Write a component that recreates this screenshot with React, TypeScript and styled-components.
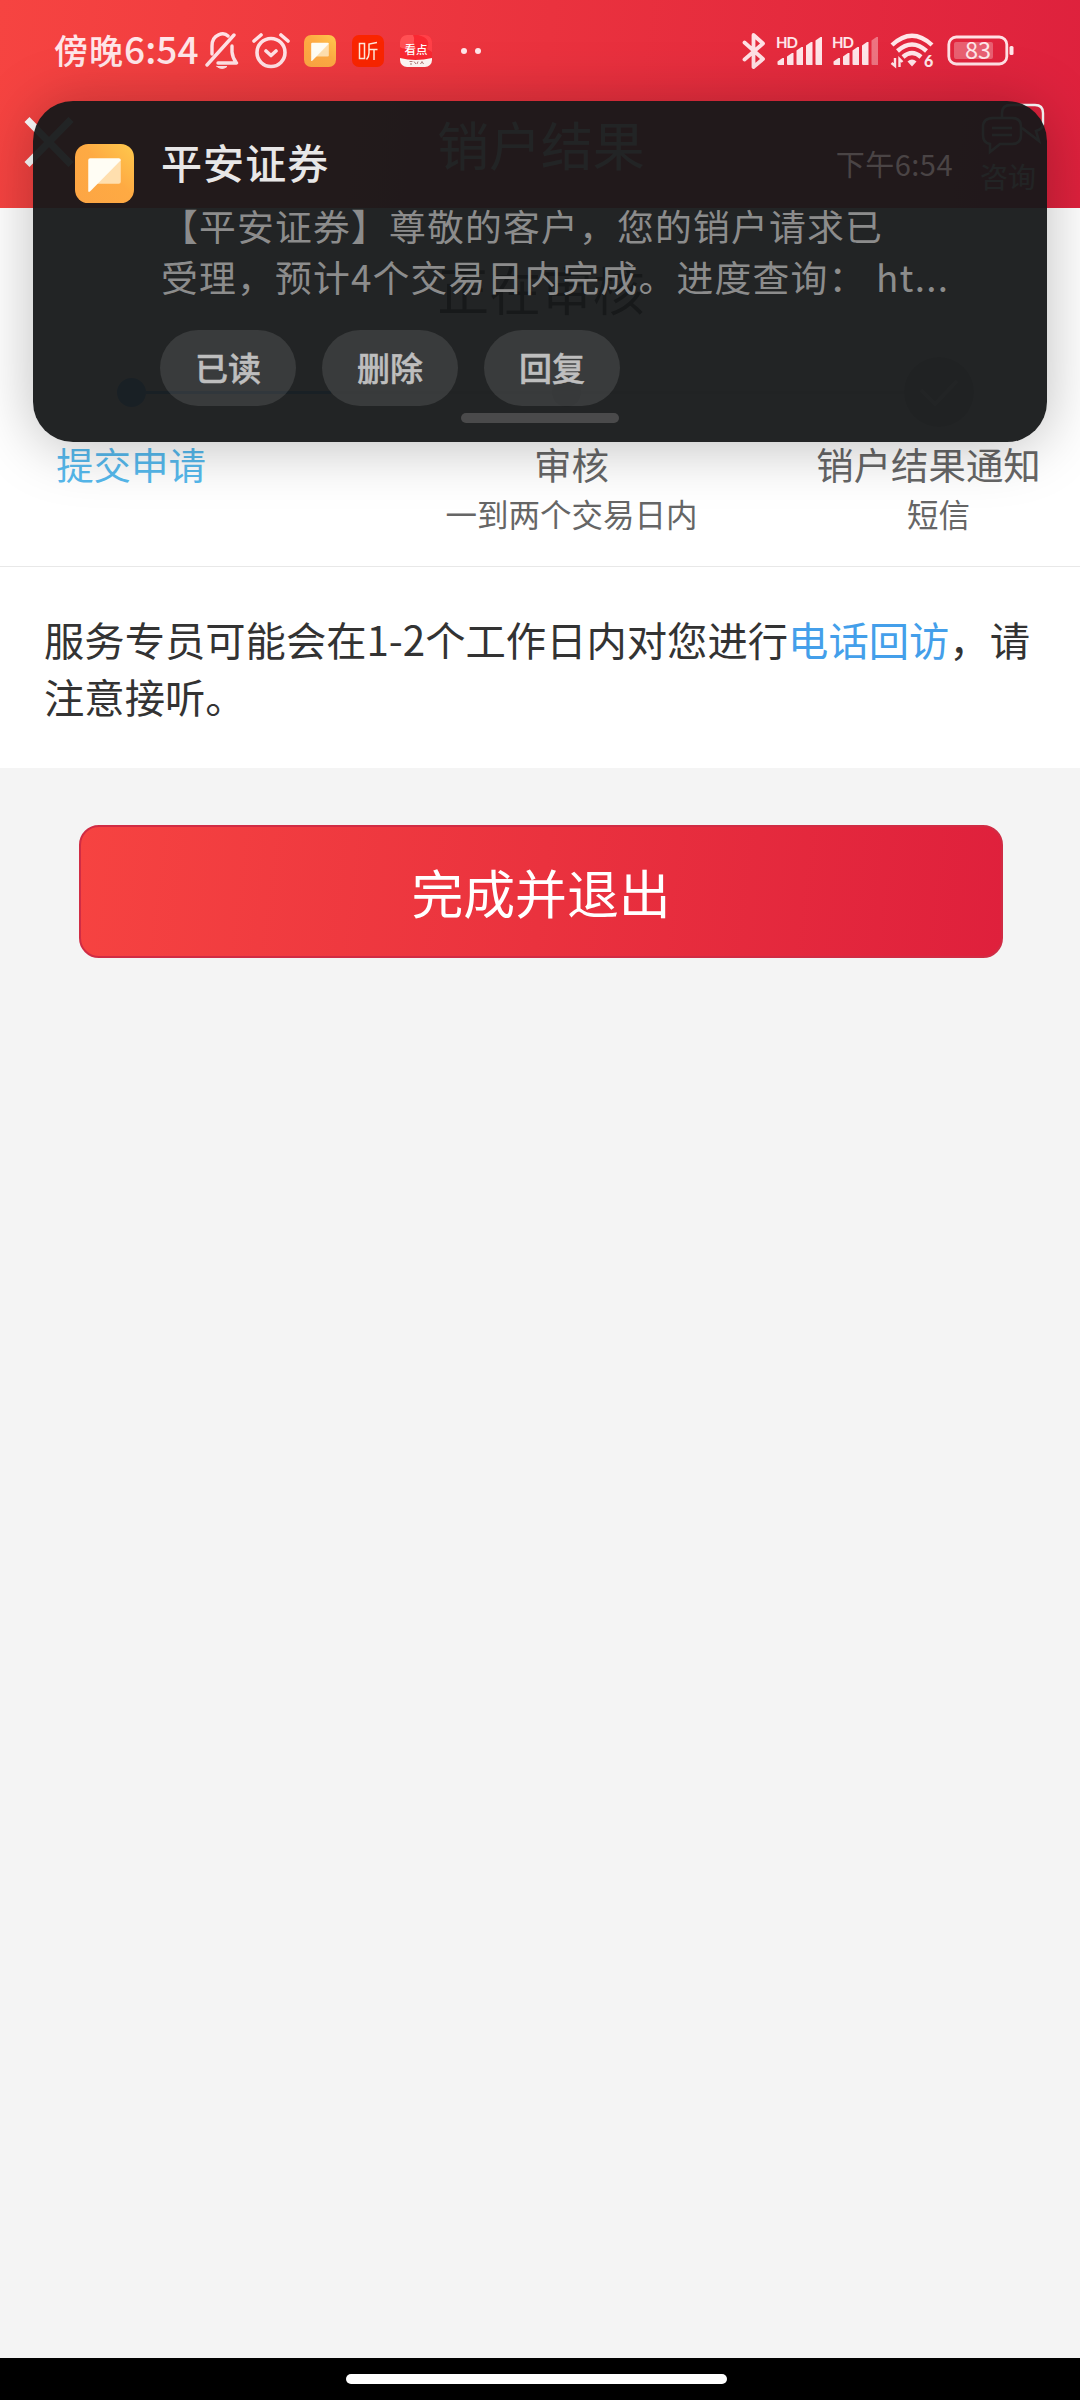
import React from 'react';
import styled, { createGlobalStyle } from 'styled-components';

const cjk = `'Noto Sans CJK SC', sans-serif`;

const GlobalStyle = createGlobalStyle`
  * { box-sizing: border-box; }
  body { margin: 0; background: #f4f4f4; font-family: ${cjk}; }
`;

const Screen = styled.div`
  position: relative;
  width: 1080px;
  height: 2400px;
  display: flex;
  flex-direction: column;
  overflow: hidden;
  background: #f4f4f4;
`;

const Header = styled.header`
  height: 208px;
  flex: none;
  background: linear-gradient(97deg, #f64441 0%, #ea323e 50%, #de213d 100%);
  color: #fff;
`;

const StatusBar = styled.div`
  height: 101px;
  padding: 0 66px 0 54px;
  display: flex;
  align-items: center;
  justify-content: space-between;
  color: #ffe6e9;
`;

const StatusGroup = styled.div`
  display: flex;
  align-items: center;
`;

const Clock = styled.span`
  display: flex;
  width: 151px;
  align-items: baseline;
  margin-top: -3px;
  font-size: 34px;
  line-height: 50px;
  font-weight: 500;
  white-space: nowrap;
  letter-spacing: 1px;
`;

const ClockDigits = styled.span`
  font-size: 37px;
  letter-spacing: 0.1px;
`;

const Glyph = styled.svg<{ $gap?: number }>`
  display: block;
  flex: none;
  margin-left: ${(p) => p.$gap ?? 0}px;
`;

const TitleBar = styled.div`
  height: 107px;
  padding: 0 34px 0 24px;
  display: grid;
  grid-template-columns: 200px 1fr 200px;
  align-items: start;
`;

const CloseSlot = styled.div`
  padding-top: 15px;
`;

const PageTitle = styled.h1`
  margin: 0;
  padding: 5px 0 0 12px;
  text-align: center;
  font-size: 51.84px;
  line-height: 76px;
  font-weight: 400;
`;

const Consult = styled.div`
  justify-self: end;
  width: 66px;
  padding-top: 1px;
  display: flex;
  flex-direction: column;
  align-items: center;
  font-size: 28px;
  line-height: 40px;
  white-space: nowrap;
`;

const ConsultText = styled.span`
  margin: 0 10px 0 0;
`;

const Progress = styled.section`
  height: 359px;
  flex: none;
  display: flex;
  flex-direction: column;
  background: #fff;
  border-bottom: 1px solid #e8e8e8;
`;

const Reviewing = styled.div`
  margin-top: 43px;
  padding-left: 2px;
  height: 76px;
  text-align: center;
  color: #333;
  font-size: 51.84px;
  line-height: 76px;
`;

const Track = styled.div`
  height: 72px;
  margin: 29px 106px 0 117px;
  display: flex;
  align-items: center;
`;

const Dot = styled.span<{ $color: string }>`
  width: 29px;
  height: 29px;
  border-radius: 50%;
  background: ${(p) => p.$color};
`;

const Line = styled.span<{ $color: string; $grow: number }>`
  flex: ${(p) => p.$grow} 1 0;
  height: 3px;
  background: ${(p) => p.$color};
`;

const Labels = styled.div`
  display: grid;
  grid-template-columns: 262px 619px 115px;
  color: #666;
  margin-top: 10px;
`;

const Step = styled.div`
  display: flex;
  flex-direction: column;
  align-items: center;
  white-space: nowrap;
`;

const StepName = styled.span<{ $color?: string; $shift?: number }>`
  font-size: 37.44px;
  line-height: 52px;
  color: ${(p) => p.$color ?? '#666'};
  margin-right: ${(p) => p.$shift ?? 0}px;
`;

const StepNote = styled.span`
  font-size: 31.5px;
  line-height: 46px;
`;

const Notice = styled.p`
  margin: 0;
  height: 201px;
  flex: none;
  padding: 43px 43px 0 44px;
  background: #fff;
  color: #333;
  font-size: 40.32px;
  line-height: 57px;
`;

const NoticeLink = styled.span`
  color: #449fea;
`;

const DoneButton = styled.button`
  align-self: center;
  width: 924px;
  height: 133px;
  margin-top: 57px;
  margin-left: 2px;
  padding: 0 0 1px;
  flex: none;
  border: 2px solid #d02c44;
  border-radius: 20px;
  background: linear-gradient(97deg, #f64341 0%, #ea323e 50%, #df203c 100%) border-box;
  color: #fff;
  font-family: ${cjk};
  font-size: 51.84px;
`;

const NavBar = styled.footer`
  margin-top: auto;
  height: 42px;
  flex: none;
  display: flex;
  align-items: center;
  justify-content: center;
  padding-right: 7px;
  background: #000;
`;

const NavPill = styled.span`
  width: 381px;
  height: 10px;
  border-radius: 5px;
  background: #fff;
`;

const Notification = styled.aside`
  position: absolute;
  left: 33px;
  top: 101px;
  width: 1014px;
  height: 341px;
  padding: 43px 40px 0 42px;
  display: flex;
  align-items: flex-start;
  border-radius: 40px;
  background: rgba(22, 24, 25, 0.95);
  box-shadow: 0 4px 60px rgba(0, 0, 0, 0.26);
`;

const Content = styled.div`
  margin-left: 26px;
  width: 820px;
  display: flex;
  flex-direction: column;
`;

const NoteHead = styled.div`
  height: 56px;
  padding-right: 27px;
  display: flex;
  justify-content: space-between;
`;

const Sender = styled.strong`
  margin: -13px 0 0 1px;
  font-size: 41px;
  line-height: 60px;
  font-weight: 500;
  letter-spacing: 1.1px;
  color: #e8e7e7;
`;

const Time = styled.span`
  margin-top: -2px;
  font-size: 29px;
  line-height: 42px;
  font-weight: 400;
  letter-spacing: 0.5px;
  color: #4a4445;
`;

const Message = styled.div`
  padding-left: 1px;
  font-size: 36.8px;
  line-height: 51px;
  letter-spacing: 1.2px;
  color: #8c8c8c;
  white-space: nowrap;
`;

const MessageLine = styled.div`
  height: 51px;
`;

const Actions = styled.div`
  display: flex;
  gap: 26px;
  margin-top: 28px;
`;

const Action = styled.button`
  width: 136px;
  height: 76px;
  padding: 0 0 3px;
  border: 0;
  border-radius: 38px;
  background: rgba(255, 255, 255, 0.105);
  color: #bebebe;
  font-family: ${cjk};
  font-size: 33px;
  font-weight: 500;
  -webkit-text-stroke: 0.5px #bebebe;
`;

const Handle = styled.span`
  width: 158px;
  height: 10px;
  margin: 7px 0 0 301px;
  border-radius: 5px;
  background: #4a4a4b;
`;

const AppTile = ({ size, gap }: { size: number; gap?: number }) => (
  <Glyph $gap={gap} width={size} height={size} viewBox="0 0 58 58">
    <defs>
      <linearGradient id={`tile${size}`} x1="0" y1="1" x2="1" y2="0">
        <stop offset="0" stopColor="#fda544" />
        <stop offset="0.55" stopColor="#feaa43" />
        <stop offset="1" stopColor="#fec94d" />
      </linearGradient>
    </defs>
    <rect width="58" height="58" rx="13" fill={`url(#tile${size})`} />
    <path d="M21 39H43Q45 39 45 37V15Z" fill="#ffdfae" />
    <path d="M13 16Q13 14 15 14H43Q45 14 45 16L15 46.500Q13 48 13 46Z" fill="#fffdf4" />
  </Glyph>
);

const BellOff = () => (
  <Glyph width="35" height="37" viewBox="0 0 35 37" fill="none" stroke="#ffe1e5" strokeWidth="3.4" strokeLinecap="round" strokeLinejoin="round">
    <path d="M2 33L29 3" />
    <path d="M7 22V14C7 1.500 19 0 23 4M27 14V20Q27.500 26 31.500 31H13" />
    <path d="M12 34.500H22Q17 38.500 12 34.500Z" fill="#ffe1e5" strokeWidth="1" />
  </Glyph>
);

const Alarm = () => (
  <Glyph $gap={12} width="38" height="36" viewBox="0 0 38 36" fill="none" stroke="#ffe1e5" strokeWidth="3.6" strokeLinecap="round" strokeLinejoin="round">
    <circle cx="19" cy="19.500" r="14" />
    <path d="M2 8L9 2M36 8L29 2M14 18L19 22.500L24 18" />
  </Glyph>
);

const ListenTile = () => (
  <Glyph $gap={16} width="32" height="32" viewBox="0 0 32 32">
    <rect width="32" height="32" rx="7" fill="#fa2500" />
    <g fill="none" stroke="#ffe7d8" strokeWidth="1.500">
      <path d="M7.500 8.500H12.500V23.500H7.500Z" />
      <path d="M25 7.500L17 9V18Q17 22 14.500 24.500M17 14.500H25.500M22 14.500V25" />
    </g>
  </Glyph>
);

const NewsTile = () => (
  <Glyph $gap={16} width="32" height="32" viewBox="0 0 32 32">
    <defs>
      <clipPath id="news"><rect width="32" height="32" rx="7" /></clipPath>
    </defs>
    <g clipPath="url(#news)">
      <rect width="32" height="32" fill="#f92832" />
      <path d="M0 0H13Q17 7 9 12Q4 15 0 12Z" fill="#ff5054" />
      <path d="M18 0Q32 3 27 14L32 17V0Z" fill="#ff4048" />
      <path d="M0 23Q15 27 32 23V32H0Z" fill="#fff8f5" />
    </g>
    <text x="16" y="18.500" textAnchor="middle" fontSize="11.500" fontWeight="500" fill="#fff" fontFamily={cjk}>看点</text>
    <path d="M9.500 26.500h3M10 29h2M14 26.500l2 2.500M18 26.500l-1 2.500M20.500 29l1.500-2.500 1.500 2.500" fill="none" stroke="#9a5d5c" strokeWidth=".8" />
  </Glyph>
);

const MoreDots = () => (
  <Glyph $gap={29} width="20" height="8" viewBox="0 0 20 8" fill="#ffe6e9">
    <circle cx="3" cy="4" r="3" />
    <circle cx="17" cy="4" r="3" />
  </Glyph>
);

const Bluetooth = () => (
  <Glyph width="24" height="38" viewBox="0 0 24 38" fill="none" stroke="#ffe1e5" strokeWidth="3.8" strokeLinecap="round" strokeLinejoin="round">
    <path d="M2.500 10.500L21 27L11.500 35V3L21 11.500L2.500 27.500" />
  </Glyph>
);

const Signal = ({ gap, level }: { gap: number; level: number }) => (
  <Glyph $gap={gap} width="48" height="36" viewBox="0 -4 48 36" fill="#ffe6e9">
    <text x="0" y="11" fontSize="15" fontWeight="700" fontFamily="Lato, sans-serif" textLength="22">HD</text>
    {[58, 53, 47, 42, 37].map((top, i) => {
      const x = 1.5 + i * 9.5;
      const y = top - 37;
      return (
        <path key={top} opacity={i < level ? 1 : 0.4} d={`M${x} ${y + 3.5}L${x + 5} ${y}H${x + 6.5}V28H${x + 1}Q${x} 28 ${x} 27Z`} />
      );
    })}
  </Glyph>
);

const Wifi = () => (
  <Glyph $gap={10} width="44" height="36" viewBox="0 0 44 36">
    <g fill="none" stroke="#ffe6e9" strokeWidth="4.4">
      <path d="M2 12Q22 -6.500 42 12M7.500 18Q22 5 36.500 18M13 24Q22 16 31 24" />
    </g>
    <path d="M17.500 28.500Q22 24.500 26.500 28.500L22 33.500Z" fill="#ffe6e9" />
    <path d="M5 25V33L1.500 30M9.500 34V26L12.500 29" fill="none" stroke="#ffe6e9" strokeWidth="2.400" />
    <text x="34" y="34" fontSize="16" fontWeight="900" fill="#ffe6e9" fontFamily="Lato, sans-serif">6</text>
  </Glyph>
);

const Battery = () => (
  <Glyph $gap={13} width="67" height="36" viewBox="0 -2 67 36">
    <rect x="1.800" y="2" width="58" height="27" rx="7.500" fill="none" stroke="#ffe1e5" strokeWidth="2.800" />
    <rect x="7" y="7" width="39" height="17" rx="2" fill="#fff" opacity=".27" />
    <rect x="62.500" y="11" width="4" height="9" rx="1.500" fill="#ffe6e9" />
    <text x="31" y="24" textAnchor="middle" fontSize="23.500" fontWeight="400" fill="#ffe6e9" fontFamily={cjk}>83</text>
  </Glyph>
);

const CloseIcon = () => (
  <Glyph width="50" height="52" viewBox="0 0 50 52" fill="none" stroke="#fff" strokeWidth="7">
    <path d="M3 3.500L47 48.500M47 3.500L3 48.500" />
  </Glyph>
);

const ChatIcon = () => (
  <Glyph width="66" height="54" viewBox="0 0 66 54" fill="none" stroke="#fff" strokeWidth="2.400">
    <path d="M13 16H32Q41 16 41 25V33Q41 42 32 42H20L10 50V42Q3 41 3 33V25Q3 16 13 16Z" />
    <path d="M22 16V11Q22 3 31 3H55Q63 3 63 11V22Q63 27 56 29L59 39L42 26" />
    <path d="M12 26H32M12 33H32" />
  </Glyph>
);

const CheckBadge = () => (
  <Glyph width="70" height="70" viewBox="0 0 70 70">
    <circle cx="35" cy="35" r="35" fill="#d2d2d2" />
    <path d="M17 33L31 47L53 24" fill="none" stroke="#fff" strokeWidth="3.500" />
  </Glyph>
);

export default function App() {
  return (
    <Screen>
      <GlobalStyle />
      <Header>
        <StatusBar>
          <StatusGroup>
            <Clock>傍晚<ClockDigits>6:54</ClockDigits></Clock>
            <BellOff />
            <Alarm />
            <AppTile size={32} gap={14} />
            <ListenTile />
            <NewsTile />
            <MoreDots />
          </StatusGroup>
          <StatusGroup>
            <Bluetooth />
            <Signal gap={10} level={5} />
            <Signal gap={8} level={4} />
            <Wifi />
            <Battery />
          </StatusGroup>
        </StatusBar>
        <TitleBar>
          <CloseSlot><CloseIcon /></CloseSlot>
          <PageTitle>销户结果</PageTitle>
          <Consult>
            <ChatIcon />
            <ConsultText>咨询</ConsultText>
          </Consult>
        </TitleBar>
      </Header>

      <Progress>
        <Reviewing>正在审核</Reviewing>
        <Track>
          <Dot $color="#55a5ff" />
          <Line $color="#55a5ff" $grow={1} />
          <Line $color="#dedede" $grow={1.2} />
          <Dot $color="#d2d2d2" />
          <Line $color="#e6e6e6" $grow={1.75} />
          <CheckBadge />
        </Track>
        <Labels>
          <Step><StepName $color="#56b9ed">提交申请</StepName></Step>
          <Step><StepName>审核</StepName><StepNote>一到两个交易日内</StepNote></Step>
          <Step><StepName $shift={20}>销户结果通知</StepName><StepNote>短信</StepNote></Step>
        </Labels>
      </Progress>

      <Notice>
        服务专员可能会在1-2个工作日内对您进行<NoticeLink>电话回访</NoticeLink>，请注意接听。
      </Notice>

      <DoneButton>完成并退出</DoneButton>

      <NavBar><NavPill /></NavBar>

      <Notification>
        <AppTile size={59} />
        <Content>
          <NoteHead>
            <Sender>平安证券</Sender>
            <Time>下午6:54</Time>
          </NoteHead>
          <Message>
            <MessageLine>【平安证券】尊敬的客户，您的销户请求已</MessageLine>
            <MessageLine>受理，预计4个交易日内完成。进度查询： ht...</MessageLine>
          </Message>
          <Actions>
            <Action>已读</Action>
            <Action>删除</Action>
            <Action>回复</Action>
          </Actions>
          <Handle />
        </Content>
      </Notification>
    </Screen>
  );
}
